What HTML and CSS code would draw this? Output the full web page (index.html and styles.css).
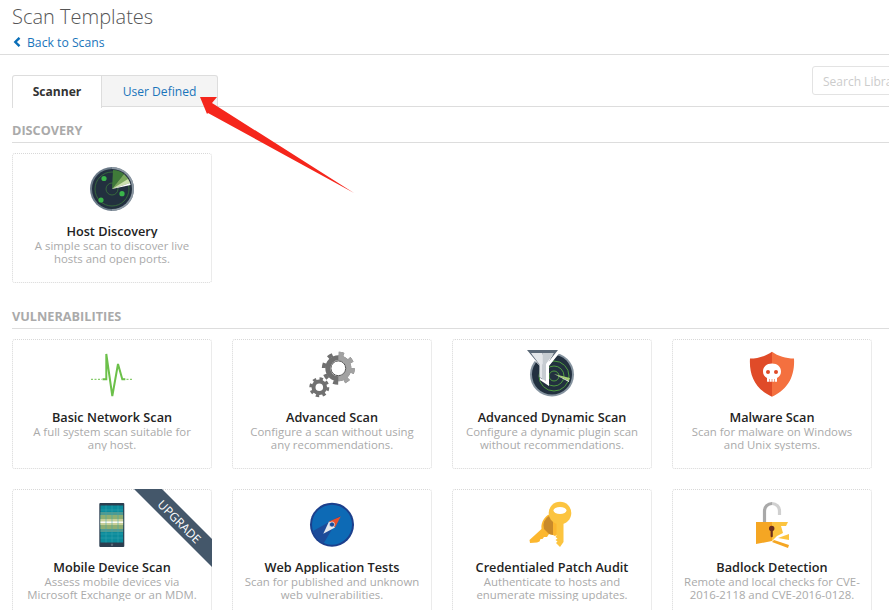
FILE: index.html
```html
<!DOCTYPE html>
<html lang="en">
<head>
<meta charset="utf-8">
<title>Scan Templates</title>
<link rel="stylesheet" href="styles.css">
</head>
<body>
<div class="page">
  <header class="header">
    <h1 class="title">Scan Templates</h1>
    <a class="back" href="#"><svg class="chev" viewBox="0 0 8 10"><path d="M6.500 .8 2.300 5l4.200 4.200" fill="none" stroke="#0a6fb8" stroke-width="2.400"/></svg>Back to Scans</a>
  </header>
  <main class="content">
    <div class="toolbar">
      <div class="tabs">
        <div class="tab active">Scanner</div>
        <div class="tab">User Defined</div>
      </div>
      <div class="search">Search Library</div>
    </div>
    <h2 class="section first">DISCOVERY</h2>
    <div class="grid">
      <article class="card">
        <svg class="icon" viewBox="0 0 50 50">
          <circle cx="25" cy="25" r="22" fill="#6b7a88"/>
          <path d="M25 3a22 22 0 0 1 0 44z" fill="#8c98a3"/>
          <circle cx="25" cy="25" r="20" fill="#22303f"/>
          <circle cx="25" cy="25" r="17" fill="none" stroke="#3f7f3c" stroke-width=".7"/>
          <circle cx="25" cy="25" r="6" fill="none" stroke="#3f7f3c" stroke-width=".7"/>
          <path d="M25 25 26 6a19 19 0 0 1 11 4z" fill="#3f7a39"/>
          <path d="M25 25 37 10a19 19 0 0 1 6 9z" fill="#7aa85c"/>
          <path d="M25 25 41 15a19 19 0 0 1 2 4z" fill="#cde0b0"/>
          <path d="M25 25 43 19l.6 2z" fill="#fff"/>
          <circle cx="17" cy="14.500" r="2.600" fill="#3ab54a"/>
          <circle cx="35" cy="29.700" r="2.600" fill="#3ab54a"/>
          <circle cx="14" cy="36" r="2.600" fill="#3ab54a"/>
        </svg>
        <h3 class="name">Host Discovery</h3>
        <p class="desc">A simple scan to discover live hosts and open ports.</p>
      </article>
    </div>
    <h2 class="section">VULNERABILITIES</h2>
    <div class="grid">
      <article class="card">
        <svg class="icon" viewBox="0 0 50 50">
          <path d="M15.500 29.300h3.800L19.300 4 25.300 46 31 14l4.300 15.300h3" fill="none" stroke="#6cc04a" stroke-width="2"/>
          <path d="M4 29.300h11M36 29.300h10" fill="none" stroke="#6cc04a" stroke-width="1" stroke-dasharray="2 1.500"/>
        </svg>
        <h3 class="name">Basic Network Scan</h3>
        <p class="desc">A full system scan suitable for any host.</p>
      </article>
      <article class="card">
        <svg class="icon" viewBox="0 0 50 50">
          <defs><clipPath id="rh"><rect x="31.300" y="0" width="20" height="40"/></clipPath></defs>
          <g fill="none" stroke="#707070">
            <circle cx="31.300" cy="18.300" r="10.500" stroke-width="5"/>
            <circle cx="31.300" cy="18.300" r="14.500" stroke-width="4" stroke-dasharray="5 6.390"/>
            <circle cx="12.300" cy="37.300" r="5.800" stroke-width="4"/>
            <circle cx="12.300" cy="37.300" r="8.500" stroke-width="3" stroke-dasharray="3.400 3.270"/>
          </g>
          <g fill="none" stroke="#a2a2a2" clip-path="url(#rh)">
            <circle cx="31.300" cy="18.300" r="10.500" stroke-width="5"/>
            <circle cx="31.300" cy="18.300" r="14.500" stroke-width="4" stroke-dasharray="5 6.390"/>
          </g>
          <circle cx="31.300" cy="18.300" r="7.400" fill="#fff" stroke="#555" stroke-width="1"/>
        </svg>
        <h3 class="name">Advanced Scan</h3>
        <p class="desc">Configure a scan without using any recommendations.</p>
      </article>
      <article class="card">
        <svg class="icon" viewBox="0 0 50 50">
          <circle cx="25" cy="24.500" r="22" fill="#8694a0"/>
          <circle cx="25" cy="24.500" r="20" fill="#22303f"/>
          <g fill="none" stroke="#4e9a3f" stroke-width="1">
            <circle cx="27" cy="26" r="5"/><circle cx="27" cy="26" r="10"/><circle cx="27" cy="26" r="15"/>
          </g>
          <path d="M27 24 43 28l-1 3z" fill="#a6cf74"/>
          <path d="M27 24 42 31v1z" fill="#fff"/>
          <path d="M-2 1h36L22 16v20l-9-6V16z" fill="#fff"/>
          <path d="M0 0h31l-9.500 12L26 4.500 5 4.500l10.500 10v15l-3-2V15z" fill="#5a6876"/>
          <path d="M4 3h11.500v26l-3-2V14.500z" fill="#e3e6e9"/>
          <path d="M15.500 3H27L19 14v17.500l-3.500-2.500z" fill="#c6ccd1"/>
        </svg>
        <h3 class="name">Advanced Dynamic Scan</h3>
        <p class="desc">Configure a dynamic plugin scan without recommendations.</p>
      </article>
      <article class="card">
        <svg class="icon" viewBox="0 0 50 50">
          <path d="M25 1.700C19 6 11 8.500 3 8.500 2 25 8 39 25 46.700z" fill="#e04b28"/>
          <path d="M25 1.700C31 6 39 8.500 47 8.500 48 25 42 39 25 46.700z" fill="#f4703f"/>
          <path d="M25 13.500c-5.500 0-9 3.500-9 8 0 3 1.300 5 4 6.500v3.700h10V28c2.700-1.500 4-3.500 4-6.500 0-4.500-3.500-8-9-8z" fill="#fff"/>
          <circle cx="21" cy="22" r="2" fill="#e04b28"/>
          <circle cx="29" cy="22" r="2" fill="#e04b28"/>
          <path d="M22.500 29v3M25 29v3M27.500 29v3" stroke="#e8603a" stroke-width=".6"/>
        </svg>
        <h3 class="name">Malware Scan</h3>
        <p class="desc">Scan for malware on Windows and Unix systems.</p>
      </article>
      <article class="card">
        <svg class="icon" viewBox="0 0 50 50">
          <rect x="12.300" y="3" width="25" height="44" rx="1" fill="#2c3e50"/>
          <rect x="13.500" y="5.500" width="22.600" height="37" fill="#0b8b9b"/>
          <rect x="13.500" y="12" width="22.600" height="20" fill="#4f9a92"/>
          <rect x="13.500" y="15" width="22.600" height="14" fill="#8fae72"/>
          <rect x="13.500" y="19" width="22.600" height="6" fill="#c8cf98"/>
          <rect x="13.500" y="21.500" width="22.600" height="1.400" fill="#fff"/>
          <path d="M19 5.500v37M25 5.500v37M31 5.500v37M13.500 10h22.600M13.500 34h22.600M13.500 38h22.600" stroke="#3aa7b3" stroke-width=".5"/>
          <circle cx="25" cy="44.800" r="1.200" fill="#5b6b78"/>
        </svg>
        <h3 class="name">Mobile Device Scan</h3>
        <p class="desc">Assess mobile devices via Microsoft Exchange or an MDM.</p>
        <div class="ribbon"><span class="ribbon-text">UPGRADE</span></div>
      </article>
      <article class="card">
        <svg class="icon" viewBox="0 0 50 50">
          <circle cx="25" cy="24.700" r="22" fill="#1c3f8c"/>
          <circle cx="25" cy="24.700" r="20" fill="#0d6ab5"/>
          <path d="M6 31 33 16 16.500 43.500C11 41 8 37 6 31z" fill="#1c4b99"/>
          <path d="M33.700 16.400 22 21.500l6 6z" fill="#e8502c"/>
          <path d="M16.300 33.700 22 21.500l6 6z" fill="#e6e9ec"/>
          <circle cx="25" cy="24.500" r="2.600" fill="#1c4b99" stroke="#e6e9ec" stroke-width=".8"/>
        </svg>
        <h3 class="name">Web Application Tests</h3>
        <p class="desc">Scan for published and unknown web vulnerabilities.</p>
      </article>
      <article class="card">
        <svg class="icon" viewBox="0 0 50 50">
          <path d="M25 14a11.500 11.500 0 0 1 3 22l-2-1-4-1-2 3-3 0-1.500 2-2 0-1 2.500-2.500 1L3 43l-.5-3 12-11c-1-7 4-15 10.500-15z" fill="#fcb72f"/>
          <path d="M22 16a11 11 0 0 0-5 13l5 5 4 1V18z" fill="#c98a2a"/>
          <circle cx="33" cy="13" r="11.300" fill="#fcc43f"/>
          <path d="M29.500 20h7v22l-3.500 5-4-4 1.500-1.500-2-1.500 2-1.500-2-1.500 1-1.500z" fill="#fcc43f"/>
          <ellipse cx="33" cy="10.500" rx="6.500" ry="3.400" fill="#fff"/>
        </svg>
        <h3 class="name">Credentialed Patch Audit</h3>
        <p class="desc">Authenticate to hosts and enumerate missing updates.</p>
      </article>
      <article class="card">
        <svg class="icon" viewBox="0 0 50 50">
          <path d="M17.500 22V11a7.500 7.500 0 0 1 7.500-7.500" fill="none" stroke="#a9a9a9" stroke-width="3.200"/>
          <path d="M25 3.500a7.500 7.500 0 0 1 7.500 7.500v4" fill="none" stroke="#d0d0d0" stroke-width="3.200"/>
          <path d="M9 22h16v19l-16 3z" fill="#f5a623"/>
          <path d="M25 22h16l-2 4h-5l2 7-6 3-5 5z" fill="#fcc43f"/>
          <path d="M42 34 31 38l11 2z" fill="#fcc43f"/>
          <path d="M27 40 42 45l-1 3-16-6z" fill="#f5a623"/>
          <circle cx="24.700" cy="28.500" r="2.700" fill="#6b2f1c"/>
          <path d="M23.600 29.500h2.200v7l-1 1-1.200-1z" fill="#6b2f1c"/>
        </svg>
        <h3 class="name">Badlock Detection</h3>
        <p class="desc">Remote and local checks for CVE-2016-2118 and CVE-2016-0128.</p>
      </article>
    </div>
  </main>
  <svg class="arrow" viewBox="0 0 889 610"><path d="M200 97h17l-5 6 142 90-146-80-1 1z" fill="#f5261c"/></svg>
</div>
</body>
</html>
```

FILE: styles.css
```css
html, body {
  margin: 0;
  height: 610px;
  overflow: hidden;
  background: #fff;
}
body {
  font-family: "Open Sans", "Liberation Sans", sans-serif;
}
.page {
  position: relative;
  width: 889px;
  height: 610px;
  overflow: hidden;
}
.header {
  height: 50px;
  padding: 4px 0 0 12px;
  border-bottom: 1px solid #ddd;
}
.title {
  margin: -1px 0 0;
  font-size: 20px;
  line-height: 27px;
  font-weight: 300;
  color: #555;
}
.back {
  display: flex;
  align-items: center;
  height: 18px;
  margin-top: 3px;
  font-size: 12.2px;
  color: #1a75bb;
  text-decoration: none;
}
.chev {
  width: 8px;
  height: 10px;
  margin: 0 6px 0 1px;
}
.content {
  padding-left: 12px;
}
.toolbar {
  display: flex;
  align-items: flex-start;
  height: 52px;
  width: 1000px;
  border-bottom: 1px solid #ddd;
  box-sizing: border-box;
}
.tabs {
  display: flex;
  margin-top: 20px;
  height: 32px;
}
.tab {
  box-sizing: border-box;
  height: 32px;
  line-height: 32px;
  font-size: 12.1px;
  text-align: center;
  color: #1a75bb;
  background: #f4f4f4;
  border: 1px solid #ddd;
  border-left: 0;
  border-radius: 0 3px 0 0;
  width: 116px;
}
.tab.active {
  position: relative;
  z-index: 1;
  width: 90px;
  height: 33px;
  font-weight: 700;
  color: #333;
  background: #fff;
  border-left: 1px solid #ddd;
  border-bottom: 0;
  border-right: 1px solid #ddd;
  border-radius: 3px 0 0 0;
}
.search {
  box-sizing: border-box;
  width: 200px;
  height: 29px;
  margin: 11px 0 0 594px;
  padding-left: 10px;
  line-height: 29px;
  font-size: 12px;
  color: #ccc;
  border: 1px solid #e3e3e3;
  border-radius: 3px;
}
.section {
  width: 1000px;
  box-sizing: border-box;
  height: 22px;
  margin: 24px 0 10px;
  font-size: 12.7px;
  line-height: 18px;
  font-weight: 700;
  color: #aaa;
  border-bottom: 1px solid #ddd;
}
.section.first {
  margin-top: 14px;
}
.grid {
  display: grid;
  grid-template-columns: repeat(4, 200px);
  gap: 20px;
}
.card {
  position: relative;
  box-sizing: border-box;
  height: 130px;
  padding: 10px 10px 0;
  border: 1px dotted #d8d8d8;
  border-radius: 3px;
  text-align: center;
}
.icon {
  display: block;
  width: 50px;
  height: 50px;
  margin: 0 auto;
  overflow: visible;
}
.name {
  height: 14px;
  margin: 10px 0 0;
  overflow: hidden;
  font-size: 12.7px;
  line-height: 15px;
  font-weight: 600;
  color: #222;
}
.desc {
  height: 26px;
  margin: 1px 0 0;
  overflow: hidden;
  font-size: 11.4px;
  line-height: 13px;
  color: #aaa;
}
.ribbon {
  position: absolute;
  top: -1px;
  right: -1px;
  width: 78px;
  height: 78px;
  background: #44576a;
  clip-path: polygon(0 0, 28px 0, 78px 50px, 78px 78px);
}
.ribbon-text {
  position: absolute;
  left: 6px;
  top: 26px;
  width: 78px;
  text-align: center;
  transform: rotate(45deg);
  font-size: 12px;
  line-height: 14px;
  color: #fff;
}
.arrow {
  position: absolute;
  left: 0;
  top: 0;
  width: 889px;
  height: 610px;
  pointer-events: none;
}
```
